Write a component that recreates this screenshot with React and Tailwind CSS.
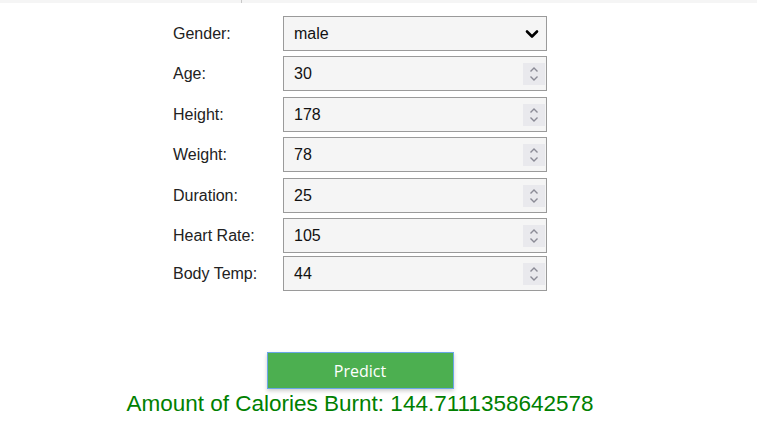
import React from 'react';

const fields = [
  { label: 'Age:', value: '30', mt: 'mt-[5px]' },
  { label: 'Height:', value: '178', mt: 'mt-[6px]' },
  { label: 'Weight:', value: '78', mt: 'mt-[5px]' },
  { label: 'Duration:', value: '25', mt: 'mt-[6px]' },
  { label: 'Heart Rate:', value: '105', mt: 'mt-[5px]' },
  { label: 'Body Temp:', value: '44', mt: 'mt-[3px]' },
];

function Spinner() {
  return (
    <div className="w-[22px] h-[22px] bg-[#e9e9ed] flex items-center justify-center">
      <svg width="12" height="18" viewBox="0 0 12 18" fill="none" stroke="#8b8b96" strokeWidth="1.4">
        <path d="M2.5 6.5 L6 3 L9.5 6.5" />
        <path d="M2.5 11.5 L6 15 L9.5 11.5" />
      </svg>
    </div>
  );
}

function Row({ label, children, className = '' }) {
  return (
    <div className={`flex items-center ${className}`}>
      <label className="w-[110px] text-[16px] text-[#222]">{label}</label>
      {children}
    </div>
  );
}

export default function App() {
  return (
    <div className="min-h-screen bg-white font-['Liberation_Sans',Arial,sans-serif]">
      {/* top strip */}
      <div className="h-[3px] bg-[#f5f5f5] flex">
        <div className="ml-[241px] w-px h-full bg-[#c8c8c8]" />
      </div>

      <div className="w-[720px] flex flex-col items-center pt-[13px]">
        <div className="flex flex-col">
          <Row label="Gender:">
            <div className="w-[264px] h-[35px] border border-[#9a9a9a] bg-[#f5f5f5] flex items-center justify-between pl-[10px] pr-[7px] text-[16px] text-[#111]">
              <span>male</span>
              <svg width="14" height="10" viewBox="0 0 14 10" fill="none" stroke="#000" strokeWidth="2.6" strokeLinecap="round" strokeLinejoin="round">
                <path d="M2 2.5 L7 7.5 L12 2.5" />
              </svg>
            </div>
          </Row>
          {fields.map((f) => (
            <Row key={f.label} label={f.label} className={f.mt}>
              <div className="w-[264px] h-[35px] border border-[#9a9a9a] bg-[#f5f5f5] flex items-center justify-between pl-[10px] pr-[1px] text-[16px] text-[#111]">
                <span>{f.value}</span>
                <Spinner />
              </div>
            </Row>
          ))}
        </div>

        <button className="mt-[61px] w-[187px] h-[37px] bg-[#4caf50] border border-[#6aa6e6] text-white text-[16px] font-['Open_Sans',sans-serif] shadow-[0_2px_4px_rgba(0,0,0,0.2)]">
          Predict
        </button>

        <div className="mt-[2px] text-[22.5px] leading-[26px] text-[#008000]">
          Amount of Calories Burnt: 144.7111358642578
        </div>
      </div>
    </div>
  );
}
